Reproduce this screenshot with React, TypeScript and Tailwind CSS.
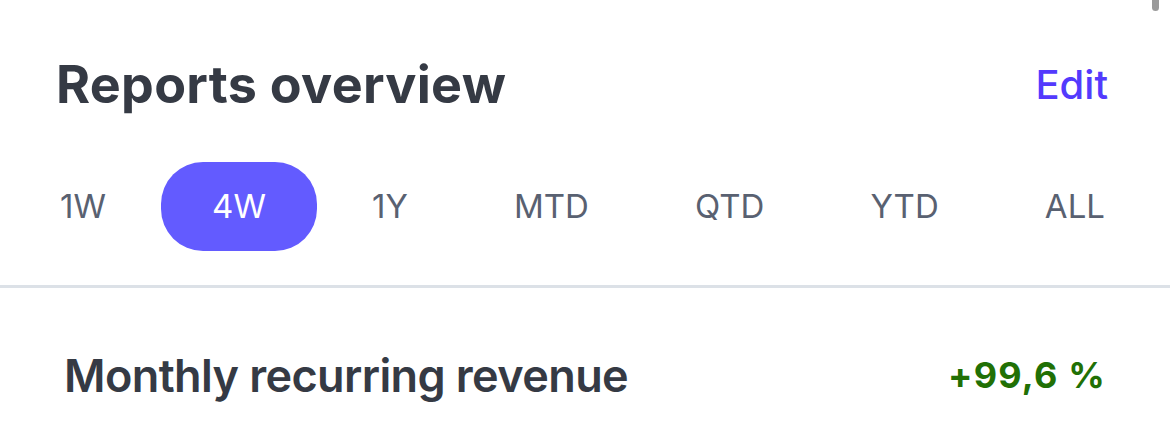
import React from "react";

const tabs = ["1W", "4W", "1Y", "MTD", "QTD", "YTD", "ALL"];

export default function App() {
  return (
    <div
      className="relative w-[1170px] h-[428px] overflow-hidden bg-white"
      style={{ fontFamily: "Inter, 'Noto Sans', sans-serif" }}
    >
      <div className="absolute top-0 left-[1152px] w-[7px] h-[11px] rounded-b-full bg-[#9a9a9a]" />
      <div className="pt-[40px]">
        <div className="flex h-[90px] items-center justify-between pl-[56px] pr-[62px]">
          <h1 className="text-[52px] font-bold leading-none tracking-[0.3px] text-[#353a44]">
            Reports overview
          </h1>
          <button className="text-[40px] font-medium leading-none text-[#533afd]">Edit</button>
        </div>
        <div className="mt-[32px] ml-[9px] mr-[14px] flex justify-between">
          {tabs.map((t) => (
            <div
              key={t}
              className={
                t === "4W"
                  ? "flex h-[89px] items-center rounded-[42px] bg-[#635bff] px-[51px] text-[33px] leading-none text-white"
                  : "flex h-[89px] items-center px-[51px] text-[33px] leading-none text-[#596171]"
              }
            >
              {t}
            </div>
          ))}
        </div>
        <div className="mt-[34px] h-[3px] bg-[#dce1e7]" />
        <div className="flex h-[174px] items-center justify-between pl-[64px] pr-[64px]">
          <span className="text-[45px] font-semibold leading-none tracking-[-0.6px] text-[#353a44]">
            Monthly recurring revenue
          </span>
          <span className="text-[36px] font-bold leading-none tracking-[1.2px] text-[#217005]">+99,6 %</span>
        </div>
      </div>
    </div>
  );
}
